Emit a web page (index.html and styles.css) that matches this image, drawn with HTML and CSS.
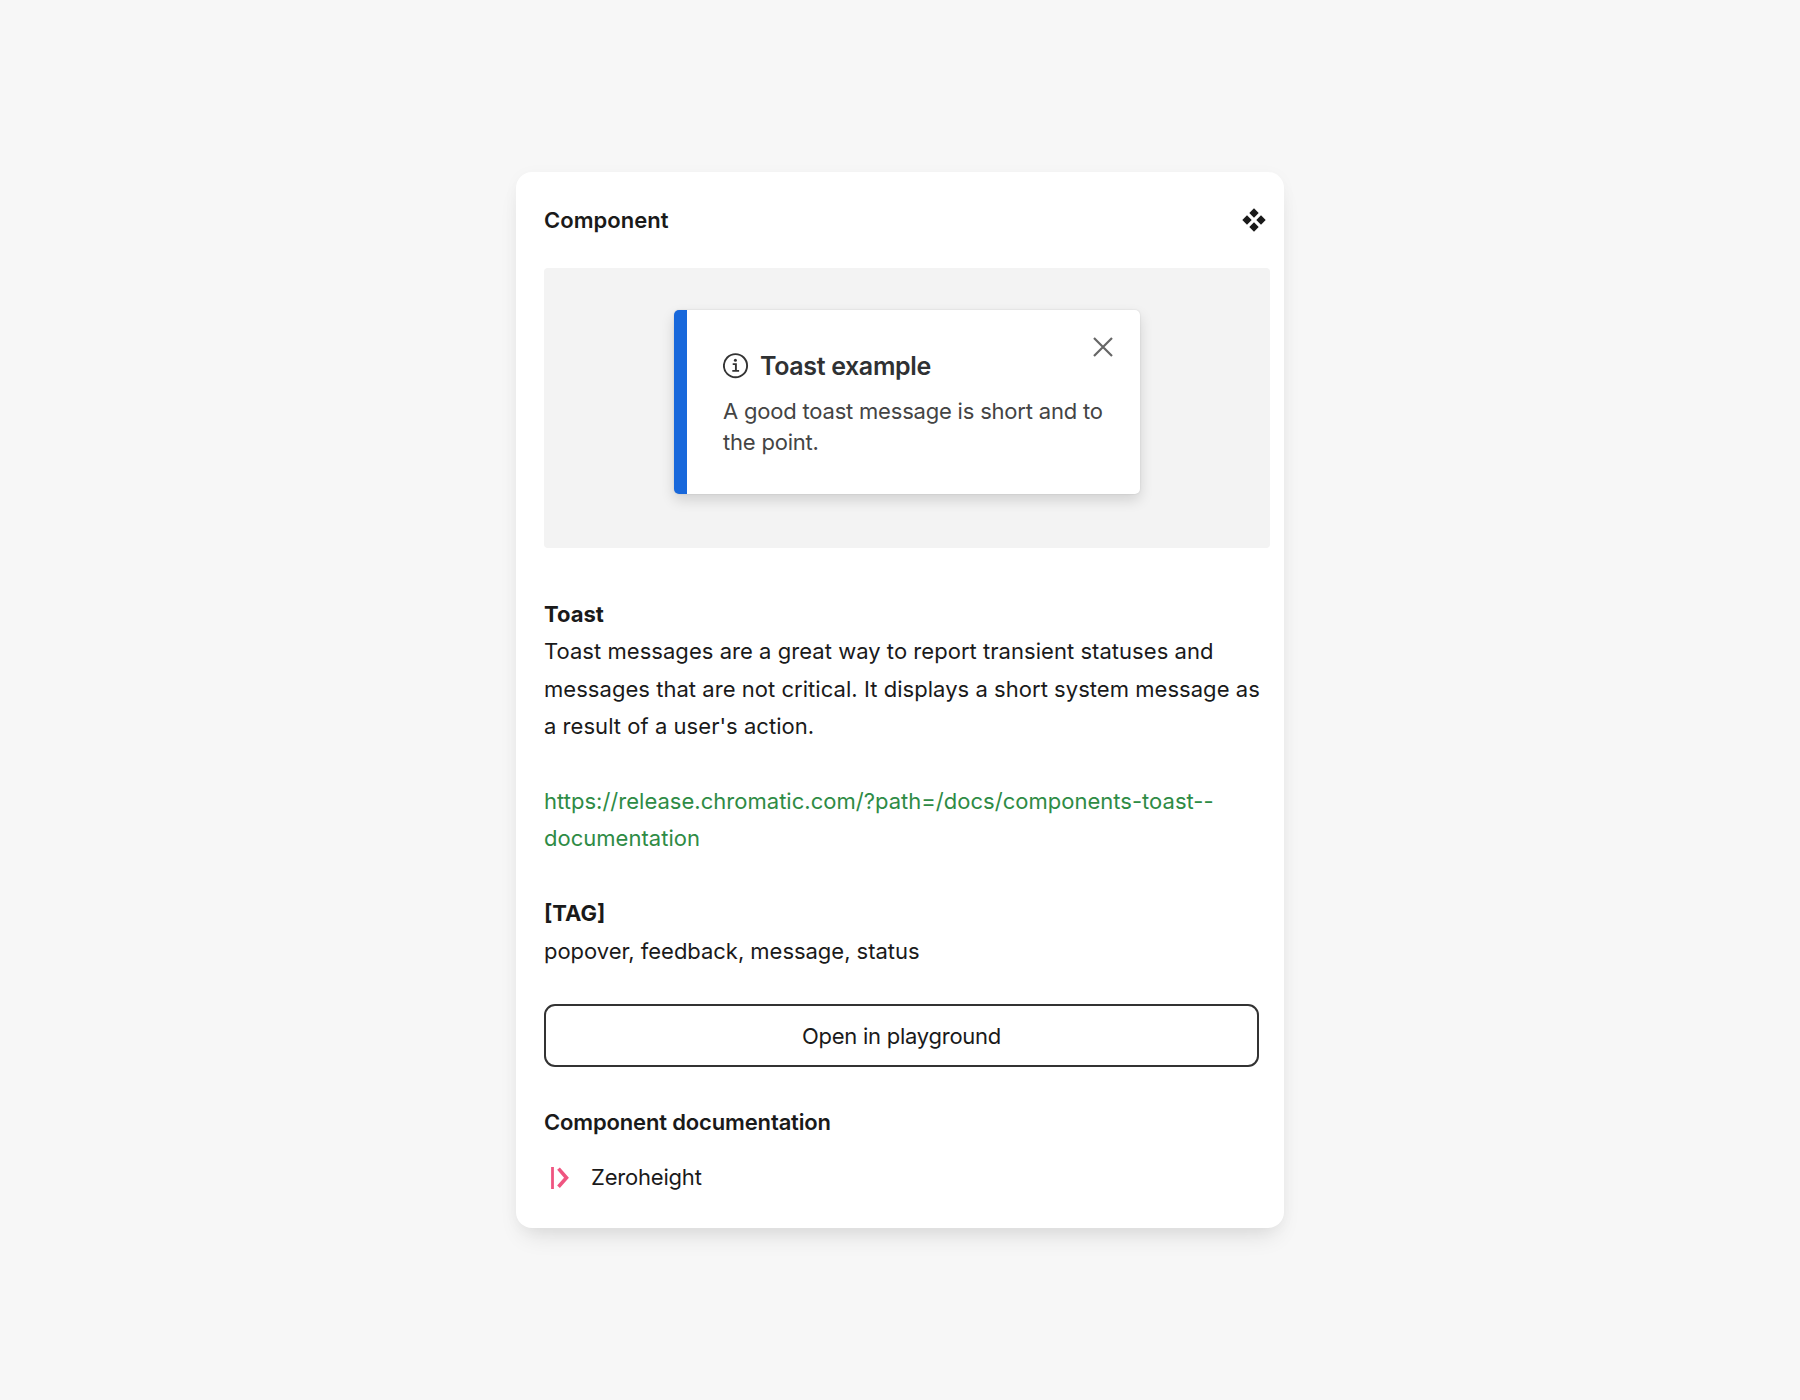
FILE: index.html
```html
<!DOCTYPE html>
<html lang="en">
<head>
    <meta charset="utf-8">
    <title>Component</title>
    <link rel="stylesheet" href="styles.css">
</head>
<body>
    <div class="card">
        <div class="card-header">
            <h2 class="title">Component</h2>
            <svg class="component-icon" width="24" height="24" viewBox="0 0 24 24">
                <path d="M12 .3l4.7 4.7L12 9.7 7.3 5zM5 7.3L9.7 12 5 16.7.3 12zM19 7.3l4.7 4.7-4.7 4.7-4.7-4.7zM12 14.3l4.7 4.7-4.7 4.7L7.3 19z"/>
            </svg>
        </div>

        <div class="preview">
            <div class="toast">
                <div class="toast-content">
                    <div class="toast-title">
                        <svg width="26" height="26" viewBox="0 0 26 26" fill="none" stroke="#333" stroke-width="1.9">
                            <circle cx="12.5" cy="12.7" r="11.6"/>
                            <path d="M9.7 11.1h3.2v6.4M9.3 17.9h6.8"/>
                            <circle cx="12.4" cy="7.3" r="1.5" fill="#333" stroke="none"/>
                        </svg>
                        <span>Toast example</span>
                    </div>
                    <p class="toast-text">A good toast message is short and to the point.</p>
                </div>
                <svg class="toast-close" width="20" height="20" viewBox="0 0 20 20" fill="none" stroke="#666" stroke-width="2.2">
                    <path d="M1 1l18 18M19 1L1 19"/>
                </svg>
            </div>
        </div>

        <div class="description">
            <h3>Toast</h3>
            <p>Toast messages are a great way to report transient statuses and<br>messages that are not critical. It displays a short system message as<br>a result of a user's action.</p>
            <a class="link" href="#">https://release.chromatic.com/?path=/docs/components-toast--<br>documentation</a>
            <h3>[TAG]</h3>
            <p class="tags">popover, feedback, message, status</p>
        </div>

        <button class="playground">Open in playground</button>

        <h2 class="title docs-title">Component documentation</h2>
        <div class="docs-item">
            <svg width="20" height="22" viewBox="0 0 20 22" fill="none" stroke="#ef5580">
                <path d="M2.5 0v22" stroke-width="2.8"/>
                <path d="M8.5 1.6l8 9.1-8 9.1" stroke-width="3.6"/>
            </svg>
            <span>Zeroheight</span>
        </div>
    </div>
</body>
</html>
```
FILE: styles.css
```css
body {
    margin: 0;
    height: 1400px;
    display: flex;
    align-items: center;
    justify-content: center;
    background: #f7f7f7;
    color: #1a1a1a;
    font-family: Inter, sans-serif;
    font-size: 22px;
}

h2, h3, p {
    margin: 0;
    font-size: inherit;
}

.card {
    box-sizing: border-box;
    width: 768px;
    height: 1056px;
    padding: 0 14px 0 28px;
    background: #fff;
    border-radius: 16px;
    box-shadow: 0 14px 24px -8px rgba(0, 0, 0, 0.12), 0 2px 16px rgba(0, 0, 0, 0.03);
}

.card-header {
    display: flex;
    align-items: center;
    justify-content: space-between;
    height: 96px;
    padding-right: 4px;
}

.title {
    font-weight: 600;
    letter-spacing: 0.05px;
}

.component-icon {
    fill: #1a1a1a;
}

.preview {
    display: flex;
    justify-content: center;
    box-sizing: border-box;
    height: 280px;
    padding-top: 42px;
    background: #f3f3f3;
    border-radius: 4px;
}

.toast {
    box-sizing: border-box;
    display: flex;
    justify-content: space-between;
    width: 466px;
    height: 184px;
    padding: 27px 27px 0 36px;
    background: #fff;
    border-left: 13px solid #1868db;
    border-radius: 5px;
    box-shadow: 0 6px 14px rgba(0, 0, 0, 0.14), 0 0 2px rgba(0, 0, 0, 0.12);
}

.toast-content {
    width: 384px;
    margin-right: -20px;
    padding-top: 13px;
    flex-shrink: 0;
}

.toast-title {
    display: flex;
    align-items: center;
    gap: 11px;
    height: 32px;
    color: #2f3133;
    font-size: 25px;
    font-weight: 600;
    letter-spacing: -0.35px;
}

.toast-text {
    margin-top: 14px;
    color: #444;
    line-height: 30.5px;
    letter-spacing: -0.2px;
}

.toast-close {
    flex-shrink: 0;
    margin-left: -20px;
}

.description {
    padding-top: 48px;
    line-height: 37.4px;
}

.description h3 {
    font-weight: 700;
}

.description p {
    letter-spacing: 0.04px;
}

.description .tags {
    letter-spacing: -0.03px;
}

.link {
    display: block;
    margin: 37.4px 0;
    color: #2e8b45;
    text-decoration: none;
    letter-spacing: 0.02px;
}

.playground {
    display: block;
    width: 715px;
    height: 63px;
    margin-top: 34px;
    padding: 0;
    background: #fff;
    border: 2px solid #333;
    border-radius: 11px;
    color: #1a1a1a;
    font: inherit;
    letter-spacing: -0.25px;
}

.docs-title {
    margin-top: 37px;
    line-height: 37px;
    letter-spacing: -0.15px;
}

.docs-item {
    display: flex;
    align-items: center;
    gap: 21px;
    margin-top: 18px;
    padding-left: 6px;
    line-height: 37px;
    letter-spacing: -0.2px;
}
```
